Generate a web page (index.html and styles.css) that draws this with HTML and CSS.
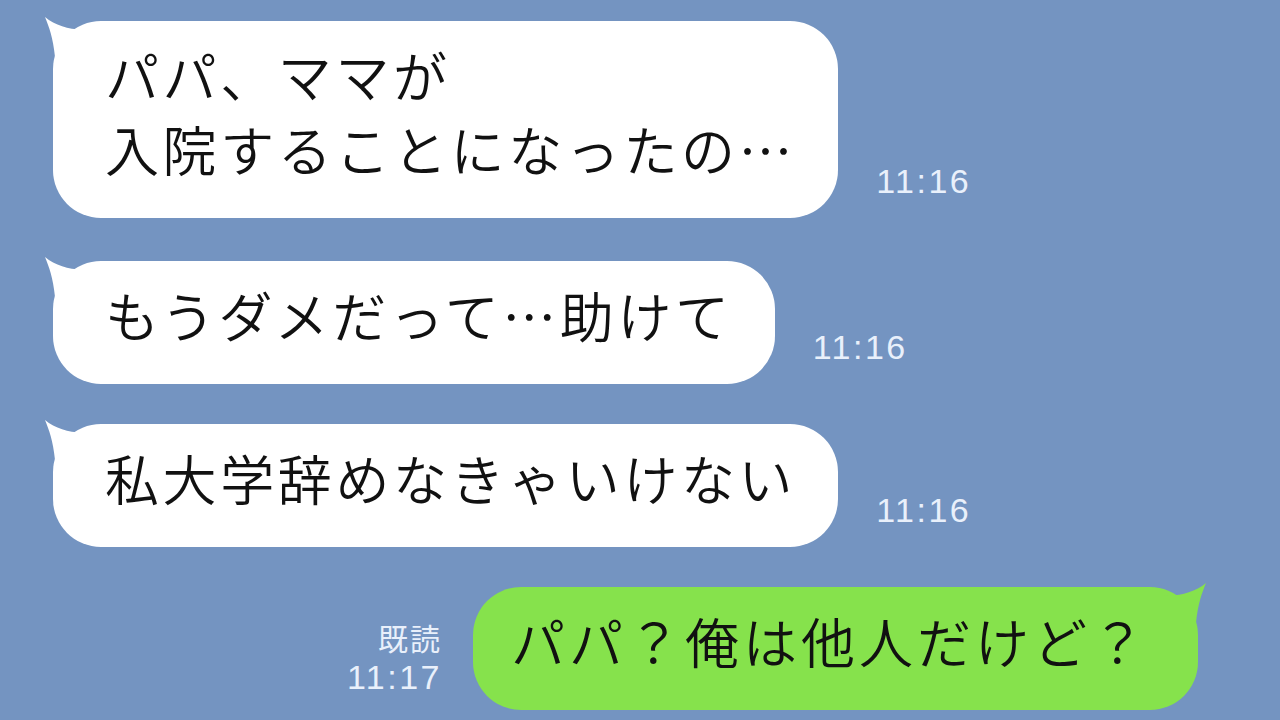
FILE: index.html
```html
<!DOCTYPE html>
<html lang="ja">
<head>
<meta charset="utf-8">
<title>LINE</title>
<link rel="stylesheet" href="styles.css">
</head>
<body>
<main class="chat">
  <div class="row row-in">
    <div class="bubble bubble-in">
      <svg class="tail tail-in" viewBox="0 0 48 44" width="48" height="44"><path d="M1,0 C5,10 9,20 11,40 L46,40 L46,12 C30,14 13,10 1,0 Z"/></svg>
      <p class="msg">パパ、ママが<br>入院することになったの…</p>
    </div>
    <span class="time">11:16</span>
  </div>
  <div class="row row-in row-gap44">
    <div class="bubble bubble-in">
      <svg class="tail tail-in" viewBox="0 0 48 44" width="48" height="44"><path d="M1,0 C5,10 9,20 11,40 L46,40 L46,12 C30,14 13,10 1,0 Z"/></svg>
      <p class="msg">もうダメだって…助けて</p>
    </div>
    <span class="time">11:16</span>
  </div>
  <div class="row row-in">
    <div class="bubble bubble-in">
      <svg class="tail tail-in" viewBox="0 0 48 44" width="48" height="44"><path d="M1,0 C5,10 9,20 11,40 L46,40 L46,12 C30,14 13,10 1,0 Z"/></svg>
      <p class="msg">私大学辞めなきゃいけない</p>
    </div>
    <span class="time">11:16</span>
  </div>
  <div class="row row-out">
    <div class="meta">
      <span class="read">既読</span>
      <span class="time time-out">11:17</span>
    </div>
    <div class="bubble bubble-out">
      <svg class="tail tail-out" viewBox="0 0 48 44" width="48" height="44"><path d="M47,0 C43,10 39,20 37,40 L2,40 L2,12 C18,14 35,10 47,0 Z"/></svg>
      <p class="msg msg-out">パパ？俺は他人だけど？</p>
    </div>
  </div>
</main>
</body>
</html>
```

FILE: styles.css
```css
html, body {
  margin: 0;
  padding: 0;
}
body {
  width: 1280px;
  height: 720px;
  overflow: hidden;
  background: #7494c1;
  font-family: "Noto Sans CJK JP", "Noto Sans", sans-serif;
}
.chat {
  display: flex;
  flex-direction: column;
  gap: 40px;
  padding-top: 21px;
}
.row {
  display: flex;
  align-items: flex-end;
}
.row-gap44 {
  margin-top: 3px;
}
.row-in {
  padding-left: 53px;
}
.row-out {
  justify-content: flex-end;
  padding-right: 82px;
}
.bubble {
  position: relative;
  border-radius: 48px;
  padding: 17px 42px 32px 52px;
}
.bubble-in {
  background: #ffffff;
}
.bubble-out {
  background: #86e24c;
  padding-left: 38px;
  padding-right: 49px;
}
.tail {
  position: absolute;
  top: -4px;
}
.tail-in {
  left: -9px;
  fill: #ffffff;
}
.tail-out {
  right: -9px;
  fill: #86e24c;
}
.msg {
  margin: 0;
  color: #111111;
  font-size: 54px;
  font-weight: 350;
  line-height: 74px;
  letter-spacing: 3.6px;
  white-space: nowrap;
}
.msg-out {
  letter-spacing: 4px;
}
.time {
  color: #e9f0fb;
  font-family: "Liberation Sans", "Noto Sans", sans-serif;
  font-size: 34px;
  line-height: 34px;
  letter-spacing: 2.5px;
  margin-left: 38px;
  margin-bottom: 20px;
}
.meta {
  display: flex;
  flex-direction: column;
  align-items: flex-end;
  margin-right: 31px;
  margin-bottom: 16px;
  gap: 6px;
}
.read {
  color: #e9f0fb;
  font-size: 30px;
  line-height: 34px;
  letter-spacing: 2px;
}
.time-out {
  margin: 0;
}
```
